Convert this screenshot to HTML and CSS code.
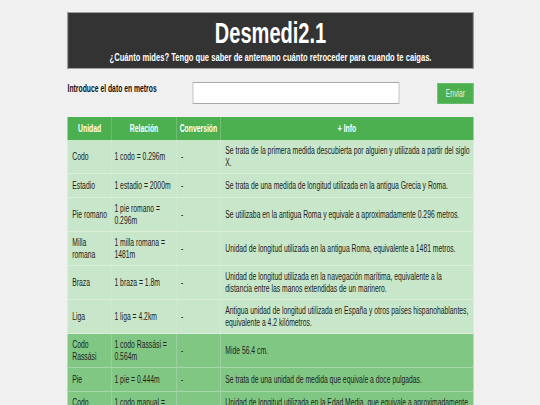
FILE: index.html
```html
<!DOCTYPE html>
<html lang="es">
<head>
<meta charset="utf-8">
<title>Desmedi2.1</title>
<link rel="stylesheet" href="styles.css">
</head>
<body>
<div class="stage">
  <div class="page">
    <header class="banner">
      <h1 class="title">Desmedi2.1</h1>
      <p class="subtitle">¿Cuánto mides? Tengo que saber de antemano cuánto retroceder para cuando te caigas.</p>
    </header>
    <form class="form">
      <label class="label">Introduce el dato en metros</label>
      <input class="field" type="text">
      <button class="btn" type="button">Enviar</button>
    </form>
    <table class="units">
      <thead>
        <tr><th class="c1">Unidad</th><th class="c2">Relación</th><th class="c3">Conversión</th><th class="c4">+ Info</th></tr>
      </thead>
      <tbody>
        <tr><td>Codo</td><td>1 codo = 0.296m</td><td>-</td><td>Se trata de la primera medida descubierta por alguien y utilizada a partir del siglo X.</td></tr>
        <tr><td>Estadio</td><td>1 estadio = 2000m</td><td>-</td><td>Se trata de una medida de longitud utilizada en la antigua Grecia y Roma.</td></tr>
        <tr><td>Pie romano</td><td>1 pie romano = 0.296m</td><td>-</td><td>Se utilizaba en la antigua Roma y equivale a aproximadamente 0.296 metros.</td></tr>
        <tr><td>Milla romana</td><td>1 milla romana = 1481m</td><td>-</td><td>Unidad de longitud utilizada en la antigua Roma, equivalente a 1481 metros.</td></tr>
        <tr><td>Braza</td><td>1 braza = 1.8m</td><td>-</td><td>Unidad de longitud utilizada en la navegación marítima, equivalente a la distancia entre las manos extendidas de un marinero.</td></tr>
        <tr><td>Liga</td><td>1 liga = 4.2km</td><td>-</td><td>Antigua unidad de longitud utilizada en España y otros países hispanohablantes, equivalente a 4.2 kilómetros.</td></tr>
        <tr class="dark"><td>Codo Rassási</td><td>1 codo Rassási = 0.564m</td><td>-</td><td>Mide 56.4 cm.</td></tr>
        <tr class="dark"><td>Pie</td><td>1 pie = 0.444m</td><td>-</td><td>Se trata de una unidad de medida que equivale a doce pulgadas.</td></tr>
        <tr class="dark"><td>Codo manual</td><td>1 codo manual = 0.5m</td><td>-</td><td>Unidad de longitud utilizada en la Edad Media, que equivale a aproximadamente medio metro.</td></tr>
      </tbody>
    </table>
  </div>
</div>
</body>
</html>
```
FILE: styles.css
```css
* { box-sizing: border-box; }
html, body { margin: 0; padding: 0; }
body {
  background: #f0f0f0;
  font-family: "Liberation Sans", Arial, sans-serif;
  color: #222;
}
.stage {
  display: flex;
  justify-content: center;
  overflow: hidden;
}
/* the reference is horizontally condensed: lay out wide, then squeeze */
.page {
  flex: none;
  width: 597px;
  margin-top: 12px;
  transform: scaleX(0.68);
  transform-origin: 50% 0;
}
.banner {
  background: #333333;
  border: 1px solid #a0a0a0;
  color: #fff;
  text-align: center;
  height: 57px;
  padding-top: 5px;
}
.title {
  margin: 0;
  font-size: 29.5px;
  line-height: 30px;
  font-weight: bold;
}
.subtitle {
  margin: 3px 0 0;
  font-size: 11.2px;
  line-height: 13px;
  font-weight: bold;
  white-space: nowrap;
}
.form {
  display: flex;
  align-items: flex-start;
  margin-top: 13px;
  height: 35px;
}
.label {
  width: 184px;
  font-size: 10px;
  line-height: 12px;
  padding-top: 1px;
  font-weight: bold;
  color: #111;
}
.field {
  width: 304px;
  height: 22px;
  border: 1px solid #a8a8a8;
  background: #fff;
  margin: 0;
}
.btn {
  margin: 1px 0 0 auto;
  width: 53px;
  height: 21px;
  background: #4caf50;
  border: 1px solid #66bb6a;
  color: #e3f2e4;
  font-family: inherit;
  font-size: 10px;
  padding: 0;
}
.units {
  width: 597px;
  table-layout: fixed;
  border-collapse: collapse;
  font-size: 10px;
}
.units th {
  background: #4caf50;
  color: #fff;
  font-weight: bold;
  height: 23px;
  padding: 0;
  text-align: center;
}
.c1 { width: 65px; }
.c2 { width: 95px; }
.c3 { width: 65px; }
.c4 { width: 372px; }
.units tbody tr { height: 24px; }
.units td {
  background: #c8e6c9;
  border-bottom: 1px solid #dcefdc;
  padding: 4.5px 2px 4.5px 7px;
  line-height: 12px;
  vertical-align: middle;
  text-align: left;
  color: #222;
}
.units td:nth-child(2) { padding-left: 4px; }
.units td:nth-child(4) { padding-right: 5.2px; }
.units tr.dark td {
  background: #81c784;
  border-bottom-color: #a8d8aa;
}
```
